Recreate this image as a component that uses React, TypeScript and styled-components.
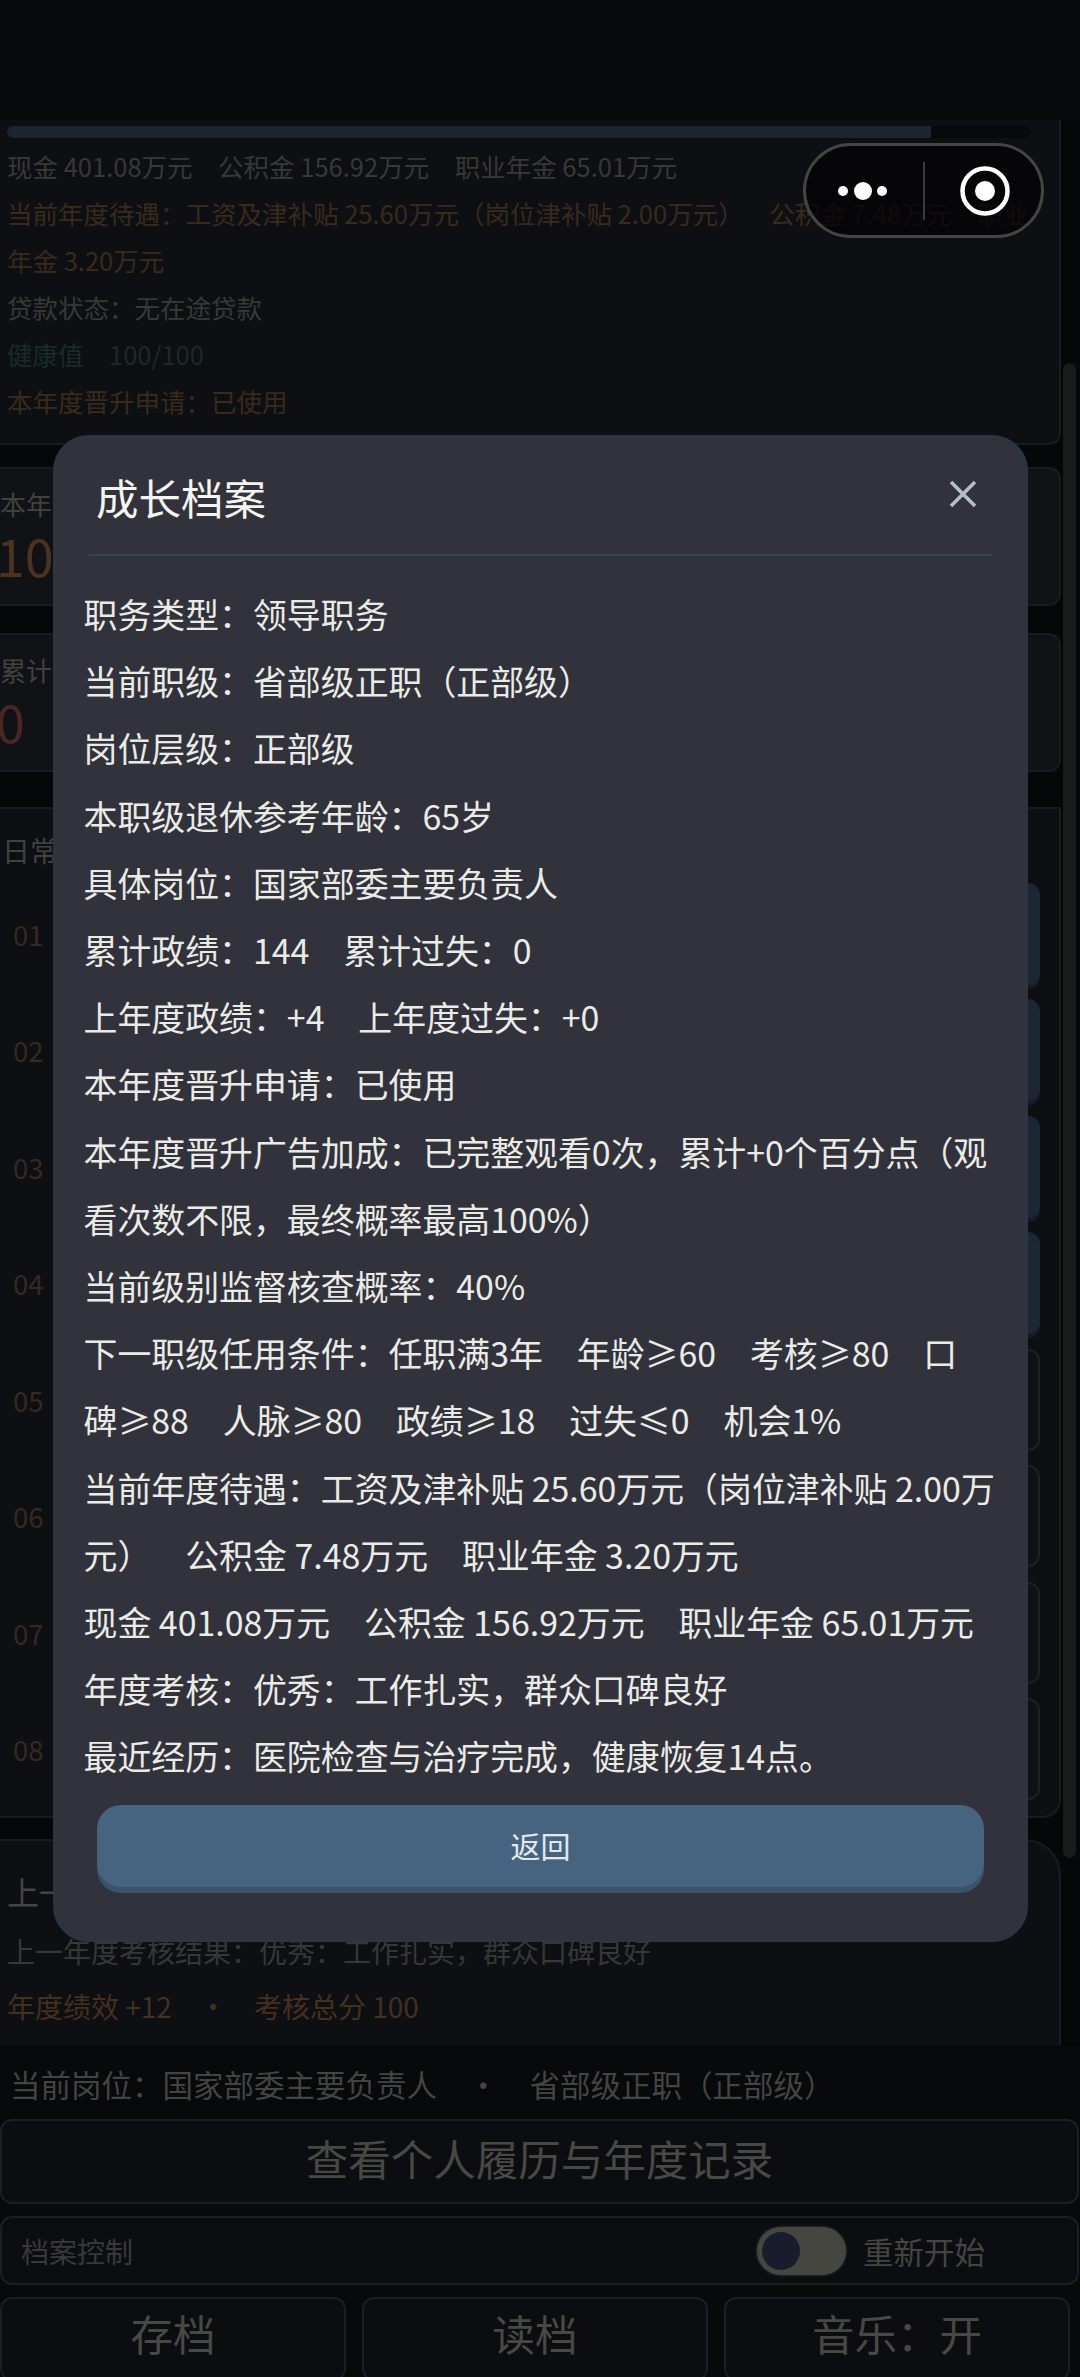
import styled, { createGlobalStyle } from "styled-components";

const GlobalStyle = createGlobalStyle`
  html, body {
    margin: 0;
    padding: 0;
    background: #060709;
  }
  * {
    box-sizing: border-box;
  }
  body {
    font-family: "Noto Sans CJK SC", "Noto Sans", sans-serif;
    text-spacing-trim: space-all;
  }
`;

const Page = styled.div`
  position: relative;
  width: 1080px;
  height: 2377px;
  overflow: hidden;
  display: flex;
  flex-direction: column;
  background: #060709;
`;

const TopBar = styled.div`
  height: 120px;
  flex: none;
  background: #08090b;
`;

const Scroll = styled.div`
  height: 1925px;
  flex: none;
  width: 1061px;
  display: flex;
  flex-direction: column;
`;

const StatusPanel = styled.section`
  height: 325px;
  flex: none;
  padding: 6px 8px 0 7px;
  margin-bottom: 22px;
  background: #0e0f13;
  border-right: 2px solid #1a1b20;
  border-bottom: 2px solid #1a1b20;
  border-bottom-right-radius: 12px;
`;

const Track = styled.div`
  width: 1024px;
  height: 12px;
  margin-bottom: 4px;
  border-radius: 6px;
  background: #08090c;
  overflow: hidden;
`;

const Fill = styled.div`
  height: 100%;
  background: #1c2632;
`;

const Line = styled.div<{ $tone?: "muted" | "warm" | "green" }>`
  font-size: 25.5px;
  line-height: 47px;
  color: ${(p) =>
    p.$tone === "warm" ? "#3a2a1c" : p.$tone === "green" ? "#182c27" : "#383838"};
`;

const StatCard = styled.section`
  height: 139px;
  flex: none;
  background: #111216;
  border: 2px solid #1a1b20;
  border-left: none;
  border-radius: 0 12px 12px 0;
  padding-top: 17px;
`;

const StatLabel = styled.div`
  font-size: 26px;
  line-height: 36px;
  color: #414141;
  white-space: nowrap;
`;

const StatValue = styled.div<{ $color: string }>`
  font-size: 52px;
  line-height: 66px;
  margin-left: -4px;
  color: ${(p) => p.$color};
`;

const Spacer = styled.div<{ $h: number }>`
  height: ${(p) => p.$h}px;
  flex: none;
`;

const DailySection = styled.section`
  height: 1011px;
  flex: none;
  background: #0e0f13;
  border: 2px solid #1a1b20;
  border-left: none;
  border-radius: 0 0 18px 0;
  padding-top: 21px;
`;

const DailyTitle = styled.div`
  font-size: 28px;
  line-height: 40px;
  padding-left: 2px;
  margin-bottom: 12.5px;
  color: #414141;
`;

const RowList = styled.div`
  display: flex;
  flex-direction: column;
  gap: 14.5px;
`;

const Row = styled.div`
  display: grid;
  grid-template-columns: 60px 1fr;
  width: 1040px;
  height: 102px;
  align-items: center;
`;

const RowNumber = styled.div`
  padding-left: 13px;
  font-size: 27.5px;
  color: #372820;
`;

const RowCard = styled.div<{ $active: boolean }>`
  height: 100%;
  border-radius: 12px;
  background: ${(p) => (p.$active ? "#1c2634" : "#111115")};
  border: ${(p) => (p.$active ? "none" : "2px solid #1f2025")};
  box-shadow: ${(p) => (p.$active ? "0 4px 0 #151c27" : "none")};
`;

const LastYearCard = styled.section`
  height: 206px;
  flex: none;
  background: #0e0f13;
  border: 2px solid #1a1b20;
  border-left: none;
  border-bottom: none;
  border-radius: 0 36px 0 0;
  padding: 27px 0 0 7px;
`;

const LastYearTitle = styled.div`
  font-size: 32px;
  line-height: 46px;
  margin-bottom: 10px;
  color: #444444;
  white-space: nowrap;
`;

const LastYearLine = styled.div<{ $warm?: boolean }>`
  font-size: 28px;
  line-height: 55px;
  color: ${(p) => (p.$warm ? "#452f1e" : "#373737")};
  white-space: nowrap;
`;

const Dot = styled.span<{ $gap: number }>`
  margin: 0 ${(p) => p.$gap}px;
`;

const Footer = styled.footer`
  flex: 1;
  background: #08090b;
  display: flex;
  flex-direction: column;
`;

const Position = styled.div`
  height: 74px;
  flex: none;
  padding: 17px 0 0 10px;
  font-size: 30.5px;
  line-height: 44px;
  color: #444442;
  white-space: nowrap;
`;

const RecordButton = styled.div`
  height: 85px;
  flex: none;
  width: 1079px;
  display: flex;
  align-items: center;
  justify-content: center;
  padding-bottom: 8px;
  margin-bottom: 12px;
  background: #0c0d11;
  border: 2px solid #1d1e24;
  border-radius: 12px;
  font-size: 42.5px;
  color: #484844;
`;

const ControlBar = styled.div`
  height: 69px;
  flex: none;
  width: 1079px;
  display: flex;
  align-items: center;
  padding: 0 92px 0 19px;
  margin-bottom: 12px;
  background: #0c0d11;
  border: 2px solid #1d1e24;
  border-radius: 12px;
`;

const ControlLabel = styled.div`
  flex: 1;
  font-size: 28px;
  color: #393939;
`;

const Toggle = styled.div`
  width: 89px;
  height: 48px;
  margin-right: 17px;
  padding: 5px;
  border-radius: 24px;
  background: #44463f;
  box-shadow: 0 0 3px #44463f;
`;

const Knob = styled.div`
  width: 38px;
  height: 38px;
  border-radius: 50%;
  background: #181c2c;
`;

const ToggleLabel = styled.div`
  font-size: 30.5px;
  color: #444442;
`;

const ActionRow = styled.div`
  width: 1070px;
  display: grid;
  grid-template-columns: repeat(3, 1fr);
  gap: 16px;
  flex: 1;
`;

const ActionButton = styled.div`
  height: 84px;
  display: flex;
  align-items: center;
  justify-content: center;
  padding-bottom: 14px;
  background: #0c0d11;
  border: 2px solid #1d1e24;
  border-radius: 12px;
  font-size: 42.5px;
  color: #484844;
`;

const ScrollThumb = styled.div`
  position: absolute;
  left: 1063px;
  top: 363px;
  width: 13px;
  height: 1495px;
  border-radius: 7px;
  background: #1a1a1a;
`;

const Capsule = styled.div`
  position: absolute;
  left: 803px;
  top: 143px;
  width: 241px;
  height: 95px;
  border: 3px solid #444444;
  border-radius: 48px;
  background: rgba(4, 4, 6, 0.78);
`;

const Modal = styled.div`
  position: absolute;
  left: 53px;
  top: 435px;
  width: 975px;
  height: 1507px;
  display: flex;
  flex-direction: column;
  background: #31323b;
  border: 3px solid #2c3541;
  border-radius: 36px;
`;

const ModalHeader = styled.div`
  height: 116px;
  flex: none;
  display: flex;
  align-items: center;
  justify-content: space-between;
  padding: 0 48px 0 40px;
`;

const ModalTitle = styled.h2`
  margin: 0;
  font-size: 42.5px;
  font-weight: 400;
  color: #f4f4f0;
`;

const CloseIcon = styled.svg`
  margin-top: -4px;
`;

const Divider = styled.div`
  height: 2px;
  flex: none;
  margin: 0 33px;
  background: #38424e;
`;

const ModalBody = styled.div`
  padding: 24px 26px 0 27.5px;
  font-size: 33.9px;
  line-height: 67.2px;
  color: #eaeae6;
`;

const BackButton = styled.div`
  height: 82px;
  flex: none;
  margin: 15px 41px 0;
  padding-bottom: 2px;
  display: flex;
  align-items: center;
  justify-content: center;
  background: #46647f;
  border-radius: 24px;
  box-shadow: 0 6px 0 #3b5368;
  font-size: 30px;
  color: #e3e8ee;
`;

const ROWS = ["01", "02", "03", "04", "05", "06", "07", "08"];

const MODAL_LINES = [
  "职务类型：领导职务",
  "当前职级：省部级正职（正部级）",
  "岗位层级：正部级",
  "本职级退休参考年龄：65岁",
  "具体岗位：国家部委主要负责人",
  "累计政绩：144　累计过失：0",
  "上年度政绩：+4　上年度过失：+0",
  "本年度晋升申请：已使用",
  "本年度晋升广告加成：已完整观看0次，累计+0个百分点（观看次数不限，最终概率最高100%）",
  "当前级别监督核查概率：40%",
  "下一职级任用条件：任职满3年　年龄≥60　考核≥80　口碑\u2060≥88　人脉≥80　政绩≥18　过失≤0　机会1%",
  "当前年度待遇：工资及津补贴 25.60万元（岗位津补贴 2.00万元）　公积金 7.48万元　职业年金 3.20万元",
  "现金 401.08万元　公积金 156.92万元　职业年金 65.01万元",
  "年度考核：优秀：工作扎实，群众口碑良好",
  "最近经历：医院检查与治疗完成，健康恢复14点。",
];

export default function App() {
  return (
    <Page>
      <GlobalStyle />
      <TopBar />

      <Scroll>
        <StatusPanel>
          <Track>
            <Fill style={{ width: "90.2%" }} />
          </Track>
          <Line>现金 401.08万元　公积金 156.92万元　职业年金 65.01万元</Line>
          <Line $tone="warm">
            当前年度待遇：工资及津补贴 25.60万元（岗位津补贴 2.00万元）　公积金 7.48万元　职业年金 3.20万元
          </Line>
          <Line>贷款状态：无在途贷款</Line>
          <Line $tone="green">健康值　100/100</Line>
          <Line $tone="warm">本年度晋升申请：已使用</Line>
        </StatusPanel>

        <StatCard>
          <StatLabel>本年度考核分</StatLabel>
          <StatValue $color="#4c3320">100</StatValue>
        </StatCard>
        <Spacer $h={27} />
        <StatCard>
          <StatLabel>累计过失</StatLabel>
          <StatValue $color="#4a2525">0</StatValue>
        </StatCard>
        <Spacer $h={35} />

        <DailySection>
          <DailyTitle>日常事务</DailyTitle>
          <RowList>
            {ROWS.map((n, i) => (
              <Row key={n}>
                <RowNumber>{n}</RowNumber>
                <RowCard $active={i < 4} />
              </Row>
            ))}
          </RowList>
        </DailySection>
        <Spacer $h={21} />

        <LastYearCard>
          <LastYearTitle>上一年度总结</LastYearTitle>
          <LastYearLine>上一年度考核结果：优秀：工作扎实，群众口碑良好</LastYearLine>
          <LastYearLine $warm>
            年度绩效 +12
            <Dot $gap={27}>·</Dot>
            考核总分 100
          </LastYearLine>
        </LastYearCard>
      </Scroll>

      <Footer>
        <Position>
          当前岗位：国家部委主要负责人
          <Dot $gap={31}>·</Dot>
          省部级正职（正部级）
        </Position>
        <RecordButton>查看个人履历与年度记录</RecordButton>
        <ControlBar>
          <ControlLabel>档案控制</ControlLabel>
          <Toggle>
            <Knob />
          </Toggle>
          <ToggleLabel>重新开始</ToggleLabel>
        </ControlBar>
        <ActionRow>
          <ActionButton>存档</ActionButton>
          <ActionButton>读档</ActionButton>
          <ActionButton>音乐：开</ActionButton>
        </ActionRow>
      </Footer>

      <ScrollThumb />

      <Capsule>
        <svg width="235" height="89" viewBox="0 0 235 89" fill="none">
          <circle cx="37" cy="45" r="5" fill="#fff" />
          <circle cx="57" cy="45" r="9" fill="#fff" />
          <circle cx="76" cy="45" r="5" fill="#fff" />
          <line x1="118" y1="16" x2="118" y2="74" stroke="#3a3a3a" strokeWidth="2" />
          <circle cx="179" cy="45" r="22.5" stroke="#fff" strokeWidth="4.5" />
          <circle cx="179" cy="45" r="10" fill="#fff" />
        </svg>
      </Capsule>

      <Modal>
        <ModalHeader>
          <ModalTitle>成长档案</ModalTitle>
          <CloseIcon width="28" height="28" viewBox="0 0 28 28" fill="none">
            <path d="M2 2 L26 26 M26 2 L2 26" stroke="#b6bccb" strokeWidth="3.6" />
          </CloseIcon>
        </ModalHeader>
        <Divider />
        <ModalBody>
          {MODAL_LINES.map((line) => (
            <div key={line}>{line}</div>
          ))}
        </ModalBody>
        <BackButton>返回</BackButton>
      </Modal>
    </Page>
  );
}
